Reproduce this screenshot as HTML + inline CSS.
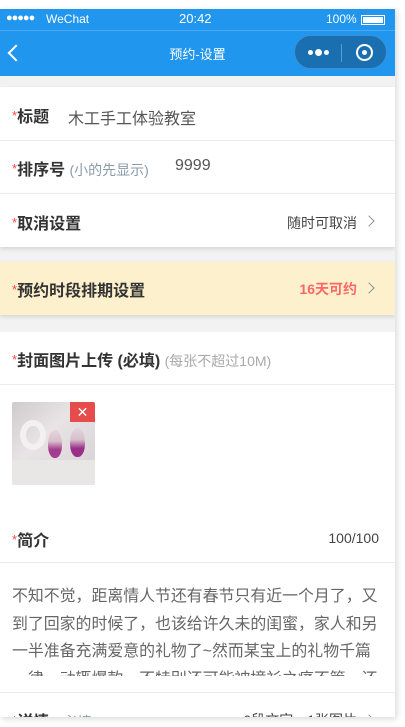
<!DOCTYPE html>
<html><head><meta charset="utf-8"><style>
*{margin:0;padding:0;box-sizing:border-box}
body{width:405px;height:727px;background:#fff;font-family:"Liberation Sans","Noto Sans CJK SC",sans-serif;position:relative;overflow:hidden}
#ph{position:absolute;left:0;top:9px;width:395px;height:708px;background:#f2f2f2;overflow:hidden;box-shadow:2px 2px 6px rgba(0,0,0,.15)}
.sb{height:21px;background:#2196ee;color:#fff;font-size:12px;position:relative}
.nav{height:46px;background:#2196ee;color:#fff;position:relative;border-top:1px solid #4aa8f0}
.row{position:absolute;left:0;width:395px;background:#fff;font-size:15px;color:#333}
.lab{position:absolute;left:12px;font-weight:bold;color:#333;font-size:16px}
.st{color:#f44;font-weight:normal;font-size:13px;position:relative;top:-2px}
.line{position:absolute;left:0;width:395px;height:1px;background:#ebebeb}
.chev{position:absolute;width:8px;height:8px;border-top:1.5px solid #8a939b;border-right:1.5px solid #8a939b;transform:rotate(45deg)}
</style></head><body>
<div id="ph">
<div class="sb">
<span style="position:absolute;left:6px;top:3px;font-size:11px;letter-spacing:-1px">●●●●●</span>
<span style="position:absolute;left:46px;top:3px">WeChat</span>
<span style="position:absolute;left:179px;top:2px;font-size:13px">20:42</span>
<span style="position:absolute;left:326px;top:3px">100%</span>
<span style="position:absolute;left:361px;top:6px;width:24px;height:10px;border:1px solid #fff;padding:1px"><span style="display:block;width:100%;height:100%;background:#fff"></span></span>
</div>
<div class="nav">
<div style="position:absolute;left:10px;top:16px;width:12px;height:12px;border-left:2px solid #fff;border-bottom:2px solid #fff;transform:rotate(45deg)"></div>
<div style="position:absolute;left:0;width:395px;text-align:center;top:13px;font-size:13px">预约-设置</div>
<div style="position:absolute;left:294px;top:4px;width:93px;height:34px;border-radius:17px;background:#1a6fb0;border:1px solid #3d8fd0">
<span style="position:absolute;left:13px;top:14px;width:5px;height:5px;border-radius:50%;background:#fff"></span>
<span style="position:absolute;left:20px;top:13px;width:7px;height:7px;border-radius:50%;background:#fff"></span>
<span style="position:absolute;left:29px;top:14px;width:5px;height:5px;border-radius:50%;background:#fff"></span>
<span style="position:absolute;left:46px;top:8px;width:1px;height:18px;background:#5a9bd0"></span>
<span style="position:absolute;left:61px;top:8px;width:17px;height:17px;border-radius:50%;border:2.5px solid #fff"></span>
<span style="position:absolute;left:67px;top:14px;width:5px;height:5px;border-radius:50%;background:#fff"></span>
</div>
</div>
<div style="position:absolute;left:0;top:78px;width:395px">
<div class="row" style="top:0;height:160px;box-shadow:0 2px 4px rgba(0,0,0,.12)">
<div class="lab" style="top:16px"><span class="st">*</span>标题</div>
<div style="position:absolute;left:68px;top:18px;color:#555;font-size:16px">木工手工体验教室</div>
<div class="line" style="top:53px"></div>
<div class="lab" style="top:69px"><span class="st">*</span>排序号 <span style="font-weight:normal;color:#8a9aa8;font-size:14px">(小的先显示)</span></div>
<div style="position:absolute;left:175px;top:70px;color:#555;font-size:16px">9999</div>
<div class="line" style="top:106px"></div>
<div class="lab" style="top:123px"><span class="st">*</span>取消设置</div>
<div style="position:absolute;right:38px;top:126px;color:#444;font-size:14px">随时可取消</div>
<div class="chev" style="left:365px;top:130px"></div>
</div>
<div class="row" style="top:175px;height:53px;background:#fdf0cc;box-shadow:0 2px 4px rgba(0,0,0,.12)">
<div class="lab" style="top:15px"><span class="st">*</span>预约时段排期设置</div>
<div style="position:absolute;right:38px;top:17px;color:#f66;font-weight:bold;font-size:14px">16天可约</div>
<div class="chev" style="left:365px;top:22px"></div>
</div>
<div class="row" style="top:245px;height:400px">
<div class="lab" style="top:15px"><span class="st">*</span>封面图片上传 (必填) <span style="font-weight:normal;color:#aaa;font-size:14px">(每张不超过10M)</span></div>
<div class="line" style="top:52px"></div>
<div style="position:absolute;left:12px;top:70px;width:83px;height:83px;border-radius:2px;background:linear-gradient(135deg,#cfcacb,#e8e4e5 40%,#d6d0d2);overflow:hidden">
<div style="position:absolute;left:0;top:58px;width:83px;height:25px;background:#e9e6e6"></div>
<div style="position:absolute;left:8px;top:18px;width:26px;height:30px;border:6px solid #f2f0f0;border-radius:50%"></div>
<div style="position:absolute;left:36px;top:28px;width:14px;height:28px;border-radius:50% 50% 45% 45%;background:linear-gradient(#e4d4dc,#d8c0cc 40%,#a33b8e 70%)"></div>
<div style="position:absolute;left:58px;top:26px;width:15px;height:29px;border-radius:50% 50% 45% 45%;background:linear-gradient(#e4d4dc,#d8c0cc 40%,#9a2f88 70%)"></div>
<div style="position:absolute;left:58px;top:0;width:25px;height:20px;background:#e74c4c;color:#fff;text-align:center;font-size:14px;line-height:20px">✕</div>
</div>
<div class="lab" style="top:195px"><span class="st">*</span>简介</div>
<div style="position:absolute;right:16px;top:198px;color:#444;font-size:14px">100/100</div>
<div class="line" style="top:230px"></div>
<div style="position:absolute;left:12px;top:251px;width:372px;height:93px;overflow:hidden;color:#666;font-size:15.9px;line-height:27.5px">不知不觉，距离情人节还有春节只有近一个月了，又到了回家的时候了，也该给许久未的闺蜜，家人和另一半准备充满爱意的礼物了~然而某宝上的礼物千篇一律，动辄爆款，不特别还可能被撞衫之痛不管，还</div>
<div class="line" style="top:360px"></div>
<div class="lab" style="top:376px"><span class="st">*</span>详情: <span style="font-weight:normal;color:#8a9aa8;font-size:14px">(必填)</span></div>
<div style="position:absolute;right:38px;top:378px;color:#444;font-size:14px">0段文字，1张图片</div>
<div class="chev" style="left:365px;top:384px"></div>
</div>
</div>
</div>
</body></html>
